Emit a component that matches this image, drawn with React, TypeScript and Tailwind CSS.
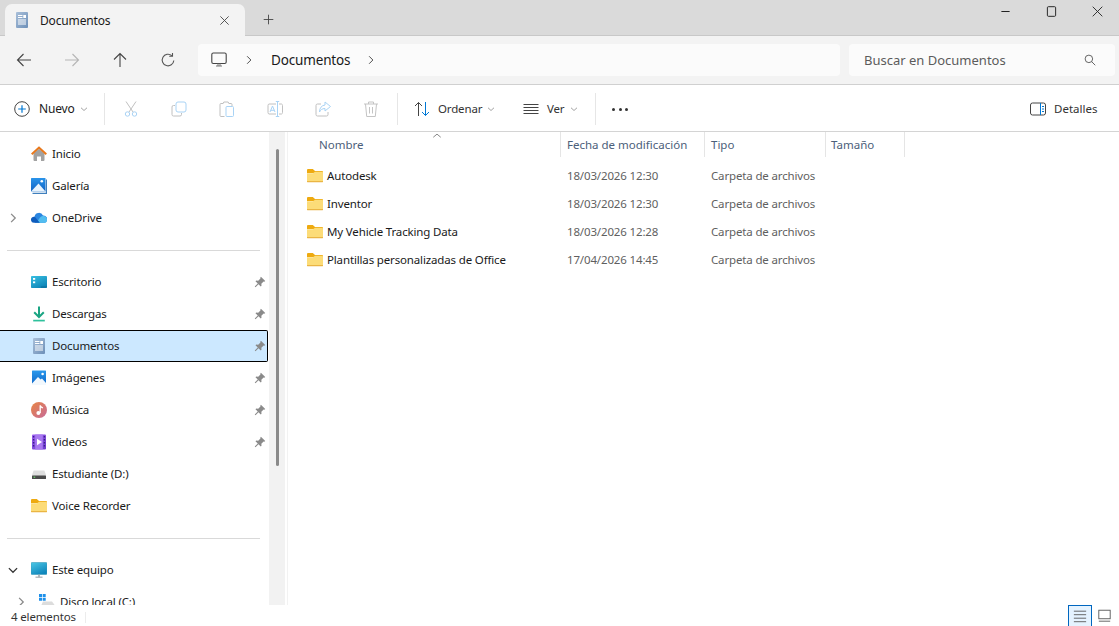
const FONT = "font-['Noto_Sans','Open_Sans',sans-serif]";

function Svg({ size = 16, className = "", children }: { size?: number; className?: string; children: React.ReactNode }) {
  return (
    <svg width={size} height={size} viewBox="0 0 16 16" fill="none" className={`shrink-0 ${className}`}>
      {children}
    </svg>
  );
}

const Grad = ({ id, from, to, x2 = 0, y2 = 1 }: { id: string; from: string; to: string; x2?: number; y2?: number }) => (
  <defs>
    <linearGradient id={id} x1="0" y1="0" x2={x2} y2={y2}>
      <stop offset="0" stopColor={from} />
      <stop offset="1" stopColor={to} />
    </linearGradient>
  </defs>
);

const DocIcon = ({ id }: { id: string }) => (
  <Svg>
    <Grad id={id} from="#a9bfd9" to="#6d8fb8" x2={1} />
    <rect x="2" y="0" width="12" height="16" rx="1" fill={`url(#${id})`} />
    <path d="M4 3.5h4.5M4 5.5h4.5M4 8h8M4 10h8M4 12h8" stroke="#fff" strokeWidth="1.1" />
    <rect x="9.3" y="3" width="2.7" height="3" fill="#fff" />
  </Svg>
);

const FolderIcon = () => (
  <Svg>
    <path d="M0 2a1 1 0 0 1 1-1h4.8L8 3h7a1 1 0 0 1 1 1v1H0z" fill="#eeaa10" />
    <path d="M0 5.2h6L8 3.8h7a1 1 0 0 1 1 1V13a1 1 0 0 1-1 1H1a1 1 0 0 1-1-1z" fill="#fcdc78" />
    <path d="M0 13h16a1 1 0 0 1-1 1.2H1A1 1 0 0 1 0 13z" fill="#eab544" />
  </Svg>
);

const HomeIcon = () => (
  <Svg>
    <path d="M2.5 7.5 8 2.8l5.5 4.7V14a1 1 0 0 1-1 1H10v-4.5H6V15H3.5a1 1 0 0 1-1-1z" fill="#a2a2a2" />
    <path d="M0.7 8.3 8 1.6l7.3 6.7" stroke="#e8781c" strokeWidth="2" />
  </Svg>
);

const GalleryIcon = () => (
  <Svg>
    <Grad id="gal" from="#2a94ea" to="#0f62c4" />
    <rect x="0" y="0" width="14.5" height="13.5" rx="0.5" fill="url(#gal)" />
    <path d="M0 13.5 7.5 5.5l7 8z" fill="#e8f3fc" />
    <circle cx="10.8" cy="3.2" r="1.3" fill="#fff" />
    <path d="M15.5 1.5v13.8H1.5" stroke="#3f7fbd" strokeWidth="1.3" />
  </Svg>
);

const CloudIcon = () => (
  <Svg>
    <path d="M3.5 6.5a4.5 4.5 0 0 1 8.5-1 3.8 3.8 0 0 1 3.8 5.6c-.4 1-1.2 1.7-2.3 1.7H4z" fill="#2a86e0" />
    <path d="M5.5 12.8 9 7.6a3.8 3.8 0 0 1 2.7-1.5 3.6 3.6 0 0 1 4.2 4.6c-.3 1.2-1.2 2.1-2.4 2.1z" fill="#52bdf0" />
    <path d="M0 10.2a3 3 0 0 1 3.8-3.4l5 6H3a3 3 0 0 1-3-2.6z" fill="#0f5cbc" />
  </Svg>
);

const DesktopIcon = () => (
  <Svg>
    <Grad id="desk" from="#39c0e2" to="#0f86b8" x2={0.6} />
    <rect x="0" y="2" width="16" height="12" rx="0.8" fill="url(#desk)" />
    <rect x="2" y="4" width="2.2" height="1.8" fill="#fff" />
    <rect x="2" y="7.4" width="2.2" height="1.8" fill="#fff" />
    <path d="M10.5 13h5" stroke="#0b4e70" strokeDasharray="1 1" />
  </Svg>
);

const DownloadIcon = () => (
  <Svg>
    <path d="M8 0.5v10M3.2 6.3 8 11l4.8-4.7" stroke="#1aa583" strokeWidth="2" />
    <path d="M2.2 14.6h11.6" stroke="#2fc19c" strokeWidth="1.7" />
  </Svg>
);

const PicturesIcon = () => (
  <Svg>
    <Grad id="pic" from="#2a98ec" to="#0e66c8" />
    <rect x="1" y="0.5" width="14" height="14.5" rx="0.5" fill="url(#pic)" />
    <path d="M1 15v-1.5L7 7l2.6 2.6L11 8.4l4 4.6V15z" fill="#f2f8fd" />
    <circle cx="11.6" cy="4" r="1.3" fill="#fff" />
  </Svg>
);

const MusicIcon = () => (
  <Svg>
    <Grad id="mus" from="#e88443" to="#c76b9a" x2={1} />
    <circle cx="8" cy="8" r="8" fill="url(#mus)" />
    <path d="M9.2 3.2v7.8M9.2 3.3c.4 1.6 1.6 2 2.6 2.7" stroke="#fff" strokeWidth="1.3" />
    <circle cx="7.4" cy="11" r="2" fill="#fff" />
  </Svg>
);

const VideoIcon = () => (
  <Svg>
    <Grad id="vid" from="#9a5cf0" to="#6c3ccc" x2={1} />
    <rect x="1" y="0.5" width="14" height="15" rx="1" fill="url(#vid)" />
    <rect x="4.2" y="0.5" width="7.6" height="15" fill="#a878f0" />
    <path d="M6 4.8v6.4l5-3.2z" fill="#fff" />
    <path d="M2.6 2v12M13.4 2v12" stroke="#3a1f88" strokeWidth="1.4" strokeDasharray="1.4 1.6" />
  </Svg>
);

const DriveIcon = () => (
  <Svg>
    <path d="M2.6 4.5h10.8l1.6 4.5v1H1V9z" fill="#dfdfdf" />
    <rect x="1" y="9.5" width="14" height="3.5" rx="0.6" fill="#4b4b4b" />
    <path d="M2.6 11.2h1.6" stroke="#6be06b" strokeWidth="1.1" />
  </Svg>
);

const MonitorIcon = () => (
  <Svg>
    <Grad id="mon" from="#4cc8e6" to="#0f86bc" x2={0.6} />
    <rect x="0" y="0.5" width="16" height="12" rx="1" fill="url(#mon)" stroke="#3c9cba" strokeWidth="0.6" />
    <path d="M8 12.5v2.4" stroke="#9ea8ae" strokeWidth="1.6" />
    <path d="M4.5 15.2h7" stroke="#a8b0b5" strokeWidth="1.3" />
  </Svg>
);

const WinDriveIcon = () => (
  <Svg>
    <path d="M0 0h3v3H0zM3.7 0h3v3h-3zM0 3.7h3v3H0zM3.7 3.7h3v3h-3z" fill="#1e90ea" />
    <path d="M4 7.5h9l2.6 3.5v1H2z" fill="#dcdcdc" />
    <rect x="2" y="11.5" width="13.6" height="4" rx="0.5" fill="#4a4a4a" />
    <path d="M3.5 13.4h1.6" stroke="#6be06b" strokeWidth="1.1" />
  </Svg>
);

const PinIcon = () => (
  <Svg size={12}>
    <path d="M9.2 1 15 6.8l-1.2.8-1-.2-3 3 .2 2.6-1 1-3-3L2 15l-1-1 4-4-3-3 1-1 2.6.2 3-3-.2-1z" fill="#8a8a8a" />
  </Svg>
);

const Chev = ({ open = false, dark = false }: { open?: boolean; dark?: boolean }) => (
  <Svg size={12}>
    <path
      d={open ? "M2.5 5.5 8 11l5.5-5.5" : "M5.5 2.5 11 8l-5.5 5.5"}
      stroke={dark ? "#333" : "#8a8a8a"}
      strokeWidth="1.7"
    />
  </Svg>
);

const MiniDown = () => (
  <Svg size={8}>
    <path d="M2 5.5 8 11l6-5.5" stroke="#8a8a8a" strokeWidth="1.6" />
  </Svg>
);

function Tool({ w, children }: { w: string; children: React.ReactNode }) {
  return <div className={`flex items-center justify-center ${w}`}>{children}</div>;
}

const ToolSep = () => <div className="w-px h-[32px] bg-[#e6e6e6] shrink-0" />;

function NavRow({
  icon,
  label,
  pin,
  chevron,
  selected,
  indent,
}: {
  icon: React.ReactNode;
  label: string;
  pin?: boolean;
  chevron?: "open" | "closed";
  selected?: boolean;
  indent?: boolean;
}) {
  return (
    <div
      className={`h-[32px] flex items-center shrink-0 w-[268px] pl-[7px] ${
        selected ? "bg-[#cce8ff] border-y border-r border-black rounded-r-[2px]" : ""
      } ${indent ? "ml-[8px] !w-[260px]" : ""}`}
    >
      <div className="w-[12px] flex justify-center">
        {chevron === "open" && <Chev open dark />}
        {chevron === "closed" && <Chev />}
      </div>
      <div className="ml-[12px]">{icon}</div>
      <span className="ml-[5px] flex-1 whitespace-nowrap">{label}</span>
      {pin && (
        <div className={selected ? "mr-[1px]" : "mr-[2px]"}>
          <PinIcon />
        </div>
      )}
    </div>
  );
}

const Divider = () => <div className="h-px bg-[#d9d9d9] ml-[7px] w-[253px] mt-[16px] mb-[15px] shrink-0" />;

const files = [
  { name: "Autodesk", date: "18/03/2026 12:30" },
  { name: "Inventor", date: "18/03/2026 12:30" },
  { name: "My Vehicle Tracking Data", date: "18/03/2026 12:28" },
  { name: "Plantillas personalizadas de Office", date: "17/04/2026 14:45" },
];

export default function App() {
  return (
    <div className={`${FONT} w-[1119px] h-[626px] overflow-hidden bg-white flex flex-col text-[#1a1a1a] text-[11.5px] tracking-[-0.15px]`}>
      {/* title bar */}
      <div className="h-[36px] shrink-0 bg-[#dadada] border-b border-[#c8c8c8] flex items-end relative">
        <div className="ml-[5px] w-[240px] h-[32px] -mb-px bg-[#f3f3f3] rounded-t-[7px] flex items-center pl-[9px] pr-[15px]">
          <DocIcon id="doc-tab" />
          <span className="ml-[10px] text-[12px] flex-1 mt-px">Documentos</span>
          <Svg size={11}>
            <path d="M2 2l12 12M14 2 2 14" stroke="#444" strokeWidth="1.3" />
          </Svg>
        </div>
        <div className="ml-[18px] h-[32px] flex items-center">
          <Svg size={11}>
            <path d="M8 1v14M1 8h14" stroke="#444" strokeWidth="1.3" />
          </Svg>
        </div>
        <div className="absolute right-[16px] top-[6px] flex items-center gap-[35px]">
          <Svg size={11}>
            <path d="M2 8h12" stroke="#222" strokeWidth="1.5" />
          </Svg>
          <Svg size={11}>
            <rect x="2" y="1" width="12" height="14" rx="1.5" stroke="#222" strokeWidth="1.4" />
          </Svg>
          <Svg size={11}>
            <path d="M1 1l14 14M15 1 1 15" stroke="#222" strokeWidth="1.3" />
          </Svg>
        </div>
      </div>

      {/* nav bar */}
      <div className="h-[49px] shrink-0 bg-[#f3f3f3] border-b border-[#d0d0d0] flex items-center">
        <div className="w-[48px] flex justify-center">
          <Svg>
            <path d="M15 8H1.5M7.5 2 1.5 8l6 6" stroke="#444" strokeWidth="1.1" />
          </Svg>
        </div>
        <div className="w-[48px] flex justify-center">
          <Svg>
            <path d="M1 8h13.5M8.5 2l6 6-6 6" stroke="#b5b5b5" strokeWidth="1.1" />
          </Svg>
        </div>
        <div className="w-[48px] flex justify-center">
          <Svg>
            <path d="M8 15V1.5M2 7.5l6-6 6 6" stroke="#444" strokeWidth="1.1" />
          </Svg>
        </div>
        <div className="w-[48px] flex justify-center">
          <Svg>
            <path d="M13.8 8.5A5.8 5.8 0 1 1 11.8 3.6M12.5 1v3.3H9.2" stroke="#555" strokeWidth="1.1" />
          </Svg>
        </div>
        <div className="ml-[6px] w-[642px] h-[32px] rounded-[4px] bg-[#fbfbfb] flex items-center pl-[13px] text-[13.5px]">
          <Svg>
            <rect x="0.8" y="1" width="14.4" height="10.5" rx="1.5" stroke="#444" strokeWidth="1.1" />
            <path d="M5 14h6M7 11.5v2.5M9 11.5v2.5" stroke="#777" />
          </Svg>
          <div className="ml-[17px]">
            <Svg size={10}>
              <path d="M5 2l6 6-6 6" stroke="#444" strokeWidth="1.5" />
            </Svg>
          </div>
          <span className="ml-[17px]">Documentos</span>
          <div className="ml-[16px]">
            <Svg size={10}>
              <path d="M5 2l6 6-6 6" stroke="#444" strokeWidth="1.5" />
            </Svg>
          </div>
        </div>
        <div className="ml-[9px] w-[266px] h-[32px] rounded-[4px] bg-[#fbfbfb] flex items-center pl-[15px] pr-[19px] text-[13px] tracking-normal text-[#5c5c5c]">
          <span className="flex-1 mt-px">Buscar en Documentos</span>
          <Svg size={12}>
            <circle cx="6.5" cy="6.5" r="5" stroke="#555" strokeWidth="1.2" />
            <path d="M10 10l5 5" stroke="#555" strokeWidth="1.2" />
          </Svg>
        </div>
      </div>

      {/* toolbar */}
      <div className="h-[47px] shrink-0 bg-white border-b border-[#d4d4d4] flex items-center pt-[2px]">
        <div className="ml-[14px] w-[90px] flex items-center">
          <Svg>
            <circle cx="8" cy="8" r="7.3" stroke="#444" strokeWidth="1" />
            <path d="M8 4.2v7.6M4.2 8h7.6" stroke="#0078d4" strokeWidth="1.2" />
          </Svg>
          <span className="ml-[9px] text-[12px]">Nuevo</span>
          <div className="ml-[5px]">
            <MiniDown />
          </div>
        </div>
        <ToolSep />
        <div className="flex items-center pl-[2px]">
          <Tool w="w-[48px]">
            <Svg>
              <path d="M3 0.5 10 11M13 0.5 6 11" stroke="#c0c0c0" />
              <circle cx="4.5" cy="13" r="2.2" stroke="#a9d3f5" />
              <circle cx="11.5" cy="13" r="2.2" stroke="#a9d3f5" />
            </Svg>
          </Tool>
          <Tool w="w-[48px]">
            <Svg>
              <path d="M4 4.5H2.5A1.5 1.5 0 0 0 1 6v7.5A1.5 1.5 0 0 0 2.5 15H9a1.5 1.5 0 0 0 1.5-1.5V12" stroke="#c0c0c0" />
              <rect x="5" y="1" width="10" height="10" rx="2" stroke="#a9d3f5" />
            </Svg>
          </Tool>
          <Tool w="w-[48px]">
            <Svg>
              <path d="M5.5 15.5H2A1 1 0 0 1 1 14.5V3.5A1 1 0 0 1 2 2.5h2.2L4.8 1h4.4l.6 1.5H12a1 1 0 0 1 1 1V5" stroke="#c0c0c0" />
              <rect x="7" y="5.5" width="7.5" height="10" rx="1" stroke="#a9d3f5" />
            </Svg>
          </Tool>
          <Tool w="w-[48px]">
            <Svg>
              <path d="M9 3H2a1.5 1.5 0 0 0-1 1.5v7A1.5 1.5 0 0 0 2 13h7M12 3h2.5A1.5 1.5 0 0 1 15.5 4.5v7a1.5 1.5 0 0 1-1 1.5H12" stroke="#c0c0c0" />
              <path d="M10.5 0.5v15M8.8 0.5h3.4M8.8 15.5h3.4" stroke="#a9d3f5" />
              <path d="M3 11 5.5 5 8 11M3.8 9.3h3.4" stroke="#a9d3f5" />
            </Svg>
          </Tool>
          <Tool w="w-[48px]">
            <Svg>
              <path d="M6 3H2.5A1.5 1.5 0 0 0 1 4.5v9A1.5 1.5 0 0 0 2.5 15h9a1.5 1.5 0 0 0 1.5-1.5V11" stroke="#c0c0c0" />
              <path d="M10 1l5.5 4.5L10 10V7.5C7 7.5 5.5 9 4.5 11c0-4 2-6.5 5.5-7z" stroke="#a9d3f5" />
            </Svg>
          </Tool>
          <Tool w="w-[48px]">
            <Svg>
              <path d="M1 3h14M5.5 3V1h5v2M2.5 3l1.2 12.5h8.6L13.5 3M6.5 6v6.5M9.5 6v6.5" stroke="#c4c4c4" />
            </Svg>
          </Tool>
        </div>
        <div className="ml-[2px]">
          <ToolSep />
        </div>
        <div className="ml-[16px] flex items-center w-[94px]">
          <Svg>
            <path d="M4.5 15V1.5M1 5l3.5-3.5L8 5" stroke="#444" />
            <path d="M11.5 1v13.5M8 11l3.5 3.5L15 11" stroke="#0078d4" />
          </Svg>
          <span className="ml-[8px] text-[#333]">Ordenar</span>
          <div className="ml-[5px]">
            <MiniDown />
          </div>
        </div>
        <div className="ml-[15px] flex items-center w-[61px]">
          <Svg>
            <path d="M0.5 3.5h15M0.5 6.5h15M0.5 9.5h15M0.5 12.5h15" stroke="#444" />
          </Svg>
          <span className="ml-[8px] text-[#333]">Ver</span>
          <div className="ml-[6px]">
            <MiniDown />
          </div>
        </div>
        <div className="ml-[11px]">
          <ToolSep />
        </div>
        <div className="ml-[16px] flex items-center gap-[3.5px]">
          <div className="w-[3px] h-[3px] rounded-full bg-[#333]" />
          <div className="w-[3px] h-[3px] rounded-full bg-[#333]" />
          <div className="w-[3px] h-[3px] rounded-full bg-[#333]" />
        </div>
        <div className="ml-auto flex items-center w-[89px]">
          <Svg>
            <rect x="0.5" y="2" width="15" height="12" rx="2" stroke="#444" />
            <path d="M10.5 2v12" stroke="#0078d4" />
            <path d="M12 5.5h2M12 8h2M12 10.5h2" stroke="#0078d4" />
          </Svg>
          <span className="ml-[8px] text-[#333] tracking-normal">Detalles</span>
        </div>
      </div>

      {/* body */}
      <div className="h-[473px] shrink-0 flex overflow-hidden">
        <div className="w-[269px] shrink-0 flex flex-col pt-[6px] overflow-hidden">
          <NavRow icon={<HomeIcon />} label="Inicio" />
          <NavRow icon={<GalleryIcon />} label="Galería" />
          <NavRow icon={<CloudIcon />} label="OneDrive" chevron="closed" />
          <Divider />
          <NavRow icon={<DesktopIcon />} label="Escritorio" pin />
          <NavRow icon={<DownloadIcon />} label="Descargas" pin />
          <NavRow icon={<DocIcon id="doc-nav" />} label="Documentos" pin selected />
          <NavRow icon={<PicturesIcon />} label="Imágenes" pin />
          <NavRow icon={<MusicIcon />} label="Música" pin />
          <NavRow icon={<VideoIcon />} label="Videos" pin />
          <NavRow icon={<DriveIcon />} label="Estudiante (D:)" />
          <NavRow icon={<FolderIcon />} label="Voice Recorder" />
          <Divider />
          <NavRow icon={<MonitorIcon />} label="Este equipo" chevron="open" />
          <NavRow icon={<WinDriveIcon />} label="Disco local (C:)" chevron="closed" indent />
        </div>

        {/* nav scrollbar */}
        <div className="w-[16px] shrink-0 bg-[#f2f2f2] pt-[17px] flex justify-center">
          <div className="w-[3px] h-[317px] rounded-full bg-[#8a8a8a]" />
        </div>
        <div className="w-[2px] shrink-0" />
        <div className="w-px shrink-0 bg-[#f2f2f2]" />

        {/* files */}
        <div className="flex-1 flex flex-col">
          <div className="h-[25px] shrink-0 flex text-[#4c607a] tracking-normal relative">
            <div className="absolute left-[144px] -top-[1px]">
              <Svg size={10}>
                <path d="M2 10l6-5 6 5" stroke="#777" strokeWidth="1.4" />
              </Svg>
            </div>
            <div className="w-[273px] border-r border-[#e5e5e5] pl-[31px] flex items-center">Nombre</div>
            <div className="w-[144px] border-r border-[#e5e5e5] pl-[6px] flex items-center whitespace-nowrap">Fecha de modificación</div>
            <div className="w-[121px] border-r border-[#e5e5e5] pl-[6px] flex items-center">Tipo</div>
            <div className="w-[79px] border-r border-[#e5e5e5] pl-[5px] flex items-center">Tamaño</div>
          </div>
          <div className="pt-[5px] flex flex-col">
            {files.map((f) => (
              <div key={f.name} className="h-[28px] flex items-center">
                <div className="w-[272px] flex items-center pl-[19px]">
                  <FolderIcon />
                  <span className="ml-[4px] whitespace-nowrap">{f.name}</span>
                </div>
                <div className="w-[144px] pl-[7px] text-[#5f5f5f] whitespace-nowrap">{f.date}</div>
                <div className="pl-[7px] text-[#5f5f5f] whitespace-nowrap">Carpeta de archivos</div>
              </div>
            ))}
          </div>
        </div>
      </div>

      {/* status bar */}
      <div className="flex-1 flex items-center bg-white text-[#333]">
        <span className="ml-[11px] mt-[3px] w-[74px]">4 elementos</span>
        <div className="w-px h-[11px] bg-[#ececec] mt-[3px]" />
        <div className="ml-auto h-full w-[24px] bg-[#e5f3ff] border border-[#0067c0] border-b-0 flex items-center justify-center">
          <Svg size={14}>
            <path d="M1 2.5h14M1 6.5h14M1 10.5h14M1 14.5h14" stroke="#555" />
          </Svg>
        </div>
        <div className="w-[24px] mr-[3px] flex justify-center">
          <Svg size={13}>
            <rect x="1" y="1.5" width="14" height="10.5" stroke="#555" strokeWidth="1.1" />
            <path d="M1 15h14" stroke="#555" strokeWidth="1.1" />
          </Svg>
        </div>
      </div>
    </div>
  );
}
